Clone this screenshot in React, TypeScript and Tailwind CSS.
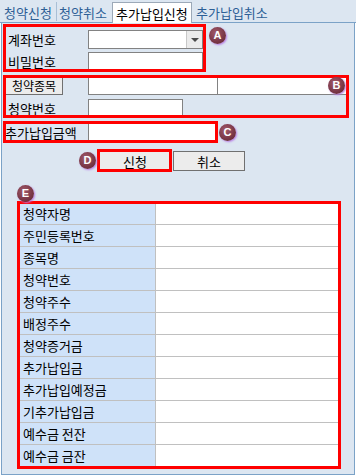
import React from "react";

const rows = [
  "청약자명",
  "주민등록번호",
  "종목명",
  "청약번호",
  "청약주수",
  "배정주수",
  "청약증거금",
  "추가납입금",
  "추가납입예정금",
  "기추가납입금",
  "예수금 전잔",
  "예수금 금잔",
];

function Badge({ letter, className }: { letter: string; className: string }) {
  return (
    <div
      className={`absolute flex h-[17px] w-[17px] items-center justify-center rounded-full bg-[radial-gradient(circle_at_40%_35%,#a25a6a,#6e2d3d_75%)] shadow-[1px_1px_2px_#b779e6] font-['Liberation_Sans',sans-serif] text-[11px] font-bold text-white ${className}`}
    >
      {letter}
    </div>
  );
}

export default function App() {
  return (
    <div className="relative h-[475px] w-[356px] bg-white font-['Noto_Sans_CJK_KR','Noto_Sans',sans-serif] text-[13px] leading-none text-black">
      {/* Tabs */}
      <div className="flex h-[23px] items-end border-b border-[#7ba2c7] bg-[#dce6f1] pl-[1px]">
        <div className="flex h-[20px] w-[55px] items-center pl-[3px] text-[#2d5f96]">청약신청</div>
        <div className="mb-[1px] h-[19px] w-px bg-[#a9bfd6]" />
        <div className="flex h-[20px] w-[55px] items-center pl-[2px] text-[#2d5f96]">청약취소</div>
        <div className="-mb-px flex h-[21px] w-[80px] items-center border-x border-t border-[#9ca9b8] bg-white pl-[3px]">
          추가납입신청
        </div>
        <div className="flex h-[20px] items-center pl-[4px] text-[#2d5f96]">추가납입취소</div>
      </div>

      {/* Panel */}
      <div className="ml-px flex h-[452px] w-[354px] flex-col border-x border-b border-[#7ba2c7] bg-[#dce6f1]">
        <div className="mt-[7px] flex h-[19px] items-center">
          <div className="w-[86px] pl-[6px]">계좌번호</div>
          <div className="flex h-full w-[115px] border border-[#828282] bg-white">
            <div className="flex-1" />
            <div className="flex w-[16px] items-center justify-center border-l border-[#c8c8c8] bg-[#ebebeb]">
              <div className="h-0 w-0 border-x-[4px] border-t-[4px] border-x-transparent border-t-[#4a4a4a]" />
            </div>
          </div>
        </div>
        <div className="mt-[3px] flex h-[19px] items-center">
          <div className="w-[86px] pl-[6px]">비밀번호</div>
          <div className="h-full w-[115px] border border-[#828282] bg-white" />
        </div>

        <div className="mt-[6px] flex h-[18px] items-center">
          <div className="h-full w-[86px] pl-[3px]">
            <button className="h-full w-[58px] border border-[#707070] bg-[#ececec] text-[12px] leading-none">
              청약종목
            </button>
          </div>
          <div className="h-full w-[130px] border border-[#828282] bg-white" />
          <div className="h-full w-[129px] border border-l-0 border-[#828282] bg-white" />
        </div>
        <div className="mt-[4px] flex h-[18px] items-center">
          <div className="w-[86px] pl-[6px]">청약번호</div>
          <div className="h-full w-[95px] border border-[#828282] bg-white" />
        </div>

        <div className="mt-[6px] flex h-[19px] items-center">
          <div className="w-[86px] pl-[3px]">추가납입금액</div>
          <div className="h-full w-[128px] border border-[#828282] bg-white" />
        </div>

        <div className="ml-[97px] mt-[9px] flex h-[20px] gap-[2px]">
          <button className="h-full w-[72px] border border-[#707070] bg-[#ececec] text-[13px] leading-none">신청</button>
          <button className="h-full w-[72px] border border-[#707070] bg-[#ececec] text-[13px] leading-none">취소</button>
        </div>

        <div className="ml-[17px] mt-[32px] w-[320px] bg-white">
          {rows.map((label) => (
            <div key={label} className="flex h-[22px] border-b border-[#c0c0c0]">
              <div className="flex w-[137px] items-center border-r border-[#c0c0c0] bg-[#cfe2f9] pl-[4px]">
                {label}
              </div>
              <div className="flex-1 bg-white" />
            </div>
          ))}
        </div>
      </div>

      {/* Annotation frames */}
      <div className="pointer-events-none absolute left-[3px] top-[24px] h-[48px] w-[203px] border-[3px] border-[#ff0000]" />
      <div className="pointer-events-none absolute left-[3px] top-[75px] h-[43px] w-[346px] border-[3px] border-[#ff0000]" />
      <div className="pointer-events-none absolute left-[3px] top-[121px] h-[22px] w-[215px] border-[3px] border-[#ff0000]" />
      <div className="pointer-events-none absolute left-[97px] top-[149px] h-[23px] w-[75px] border-[3px] border-[#ff0000]" />
      <div className="pointer-events-none absolute left-[17px] top-[201px] h-[268px] w-[324px] border-[3px] border-[#ff0000]" />

      <Badge letter="A" className="left-[209px] top-[27px]" />
      <Badge letter="B" className="left-[328px] top-[77px]" />
      <Badge letter="C" className="left-[219px] top-[124px]" />
      <Badge letter="D" className="left-[79px] top-[152px]" />
      <Badge letter="E" className="left-[17px] top-[185px]" />
    </div>
  );
}
